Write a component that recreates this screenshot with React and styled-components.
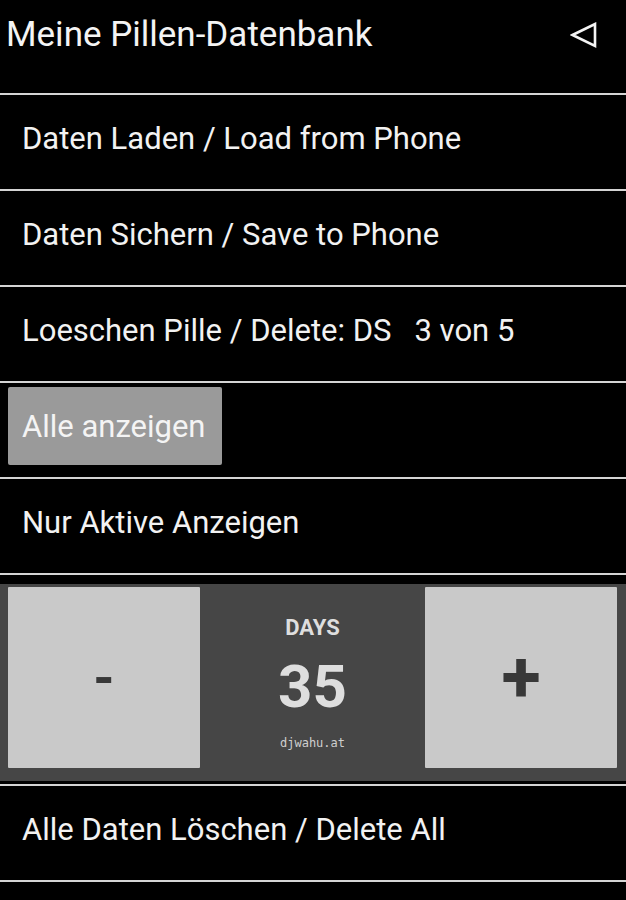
import React, { useState } from 'react';
import styled, { createGlobalStyle } from 'styled-components';

const GlobalStyle = createGlobalStyle`
  html, body {
    margin: 0;
    padding: 0;
    background: #000;
  }
  * {
    box-sizing: border-box;
  }
`;

const Screen = styled.div`
  width: 626px;
  height: 900px;
  background: #000;
  color: #f2f2f2;
  font-family: Roboto, "Noto Sans", sans-serif;
  overflow: hidden;
`;

const Header = styled.div`
  height: 93px;
  display: flex;
  align-items: flex-start;
  justify-content: space-between;
  padding: 12px 28px 0 6px;
`;

const Title = styled.h1`
  margin: 0;
  font-size: 35px;
  font-weight: 400;
  line-height: 46px;
  color: #f4f4f4;
`;

const BackIcon = styled.svg`
  margin-top: 10px;
`;

const Divider = styled.div`
  height: 2px;
  background: #d4d4d4;
`;

const Row = styled.div`
  height: 94px;
  display: flex;
  align-items: center;
  padding: 0 ${p => (p.$boxed ? '8px' : '22px')} 8px;
  font-size: 31px;
  color: #f2f2f2;
`;

const ToggleButton = styled.button`
  height: 78px;
  padding: 0 16px 0 14px;
  background: #9a9a9a;
  border: none;
  border-radius: 2px;
  font-family: inherit;
  font-size: 31px;
  color: #f4f4f4;
  display: flex;
  align-items: center;
`;

const Counter = styled.div`
  margin: 9px 0 3px;
  height: 197px;
  background: #464646;
  display: grid;
  grid-template-columns: 192px 1fr 192px;
  padding: 3px 9px 13px 8px;
`;

const StepButton = styled.button`
  background: #c9c9c9;
  border: none;
  border-radius: 1px;
  color: #383838;
  font-family: Roboto, sans-serif;
  font-size: ${p => p.$size};
  font-weight: 700;
  display: flex;
  align-items: center;
  justify-content: center;
  padding: 0;
`;

const Display = styled.div`
  display: flex;
  flex-direction: column;
  align-items: center;
  color: #dedede;
`;

const Label = styled.div`
  margin-top: 28px;
  font-size: 22px;
  font-weight: 700;
`;

const Value = styled.div`
  margin-top: 14px;
  font-size: 60px;
  font-weight: 700;
  line-height: 66px;
`;

const Credit = styled.div`
  margin-top: 16px;
  font-family: "DejaVu Sans Mono", "Liberation Mono", monospace;
  font-size: 12px;
  color: #cfcfcf;
`;

export default function App() {
  const [days, setDays] = useState(35);
  const [showAll, setShowAll] = useState(true);

  return (
    <Screen>
      <GlobalStyle />
      <Header>
        <Title>Meine Pillen-Datenbank</Title>
        <BackIcon width="28" height="28" viewBox="0 0 28 28">
          <path
            d="M2.5 13 L25 2 L25 24 Z"
            fill="none"
            stroke="#f4f4f4"
            strokeWidth="2.6"
            strokeLinejoin="miter"
          />
        </BackIcon>
      </Header>
      <Divider />
      <Row>Daten Laden / Load from Phone</Row>
      <Divider />
      <Row>Daten Sichern / Save to Phone</Row>
      <Divider />
      <Row>Loeschen Pille / Delete: DS&nbsp;&nbsp;&nbsp;3 von 5</Row>
      <Divider />
      <Row $boxed>
        <ToggleButton onClick={() => setShowAll(!showAll)}>Alle anzeigen</ToggleButton>
      </Row>
      <Divider />
      <Row>Nur Aktive Anzeigen</Row>
      <Divider />
      <Counter>
        <StepButton $size="54px" onClick={() => setDays(days - 1)}>-</StepButton>
        <Display>
          <Label>DAYS</Label>
          <Value>{days}</Value>
          <Credit>djwahu.at</Credit>
        </Display>
        <StepButton $size="72px" onClick={() => setDays(days + 1)}>+</StepButton>
      </Counter>
      <Divider />
      <Row>Alle Daten Löschen / Delete All</Row>
      <Divider />
    </Screen>
  );
}
